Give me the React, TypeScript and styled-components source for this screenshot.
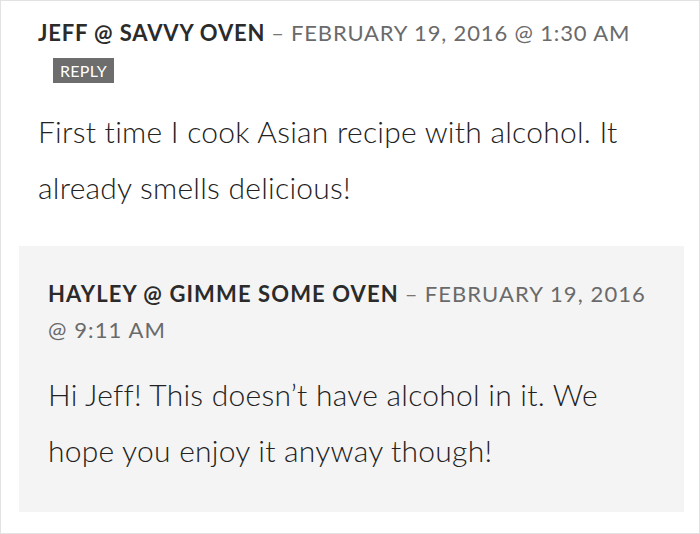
import React from "react";
import styled, { createGlobalStyle } from "styled-components";

const GlobalStyle = createGlobalStyle`
  html, body {
    margin: 0;
    padding: 0;
    background: #ffffff;
  }
  body {
    font-family: "Lato", "Open Sans", sans-serif;
  }
`;

const Frame = styled.div`
  box-sizing: border-box;
  width: 700px;
  height: 534px;
  border: 1px solid #e2e2e2;
  padding: 15px 15px 0 18px;
  overflow: hidden;
`;

const Comment = styled.div<{ $nested?: boolean }>`
  background: ${(p) => (p.$nested ? "#f4f4f4" : "transparent")};
  padding: ${(p) => (p.$nested ? "30px 30px 34px 29px" : "0 0 0 19px")};
`;

const Meta = styled.div<{ $nested?: boolean }>`
  font-size: 22px;
  line-height: ${(p) => (p.$nested ? "36px" : "34px")};
  letter-spacing: ${(p) => (p.$nested ? "1.1px" : "0.85px")};
  text-transform: uppercase;
`;

const Author = styled.span`
  font-weight: 700;
  color: #2b2b2b;
`;

const Dash = styled.span`
  color: #777;
  margin: 0 6px;
`;

const Date = styled.span`
  color: #6a6a6a;
  font-weight: 400;
`;

const ReplyButton = styled.button`
  display: block;
  margin: 8px 0 0 15px;
  padding: 0 7px;
  height: 25px;
  border: none;
  background: #6d6d6d;
  color: #ffffff;
  font-family: inherit;
  font-size: 16px;
  line-height: 25px;
  font-weight: 400;
  letter-spacing: 0.3px;
`;

const Body = styled.p<{ $nested?: boolean }>`
  margin: ${(p) => (p.$nested ? "18px" : "20px")} 0 0;
  font-size: 30px;
  line-height: 56px;
  font-weight: 300;
  letter-spacing: 0.25px;
  color: #222;
`;

const Replies = styled.div`
  margin-top: 31px;
`;

const App = () => (
  <>
    <GlobalStyle />
    <Frame>
      <Comment>
        <Meta>
          <Author>Jeff @ Savvy Oven</Author>
          <Dash>–</Dash>
          <Date>February 19, 2016 @ 1:30 AM</Date>
        </Meta>
        <ReplyButton>REPLY</ReplyButton>
        <Body>
          First time I cook Asian recipe with alcohol. It already smells
          delicious!
        </Body>
      </Comment>
      <Replies>
        <Comment $nested>
          <Meta $nested>
            <Author>Hayley @ Gimme Some Oven</Author>
            <Dash>–</Dash>
            <Date>February 19, 2016</Date> <Date>@ 9:11 AM</Date>
          </Meta>
          <Body $nested>
            Hi Jeff! This doesn’t have alcohol in it. We hope you enjoy it
            anyway though!
          </Body>
        </Comment>
      </Replies>
    </Frame>
  </>
);

export default App;
